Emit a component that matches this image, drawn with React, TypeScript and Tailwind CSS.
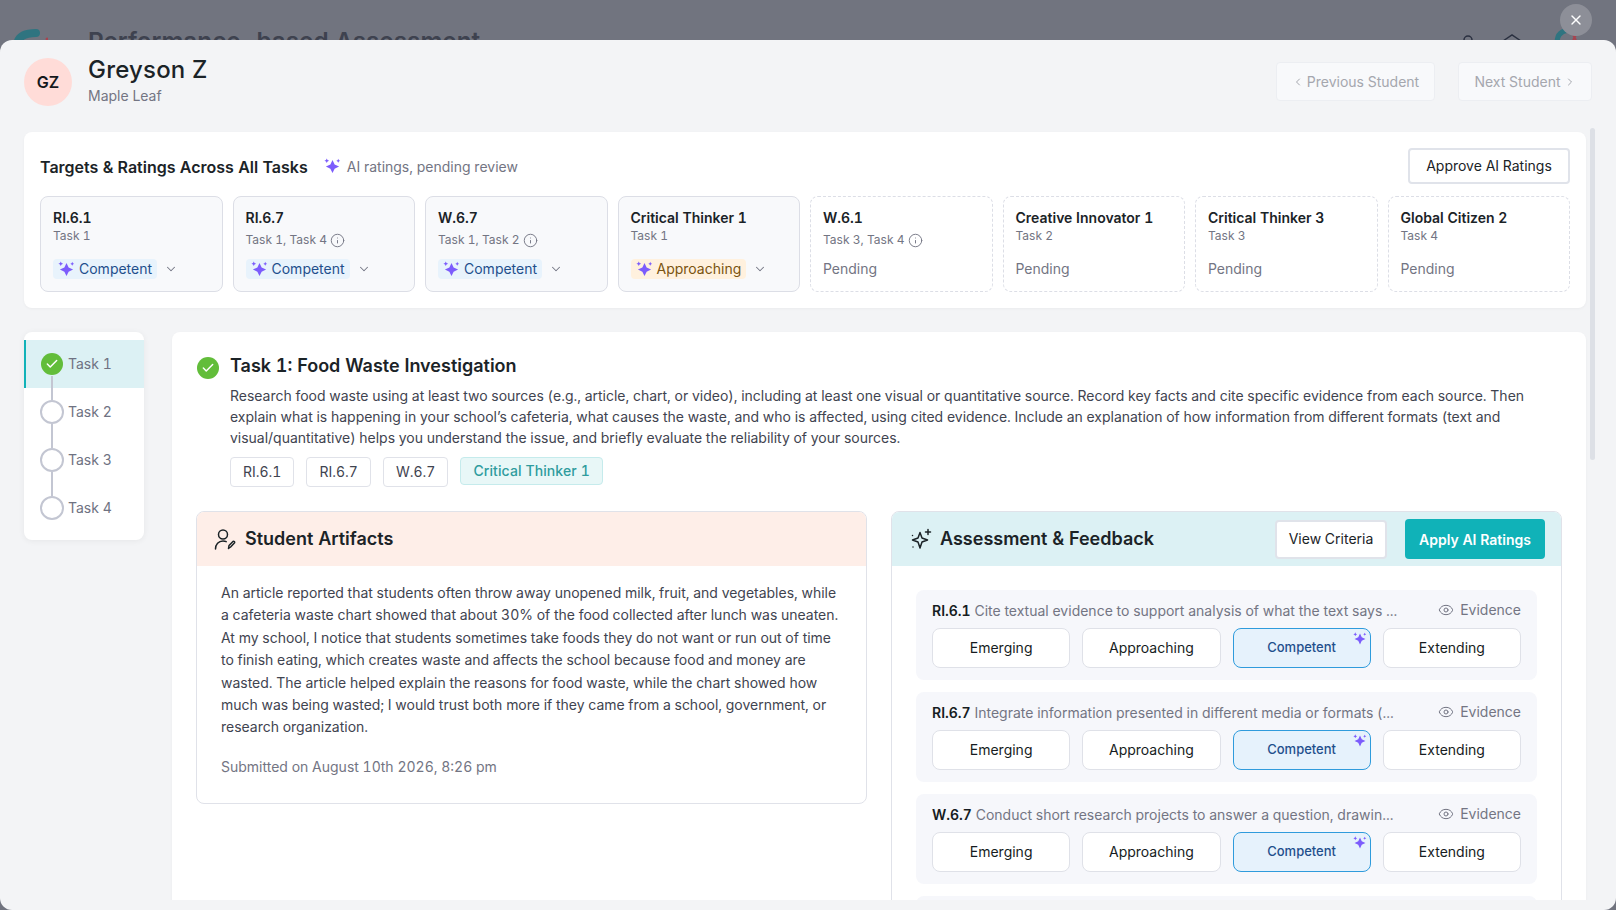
import { Check, ChevronDown, ChevronLeft, ChevronRight, Eye, Info, X } from 'lucide-react';

const TARGETS = [
  { name: 'RI.6.1', tasks: 'Task 1', rating: 'Competent' },
  { name: 'RI.6.7', tasks: 'Task 1, Task 4', info: true, rating: 'Competent' },
  { name: 'W.6.7', tasks: 'Task 1, Task 2', info: true, rating: 'Competent' },
  { name: 'Critical Thinker 1', tasks: 'Task 1', rating: 'Approaching' },
  { name: 'W.6.1', tasks: 'Task 3, Task 4', info: true },
  { name: 'Creative Innovator 1', tasks: 'Task 2' },
  { name: 'Critical Thinker 3', tasks: 'Task 3' },
  { name: 'Global Citizen 2', tasks: 'Task 4' },
];

const CRITERIA = [
  { code: 'RI.6.1', text: 'Cite textual evidence to support analysis of what the text says ...' },
  { code: 'RI.6.7', text: 'Integrate information presented in different media or formats (...' },
  { code: 'W.6.7', text: 'Conduct short research projects to answer a question, drawin...' },
];

const LEVELS = ['Emerging', 'Approaching', 'Competent', 'Extending'];

function AiSpark({ className }: { className?: string }) {
  return (
    <svg viewBox="0 0 16 16" className={className} fill="#7c5cfc">
      <path d="M8 1.8 10 6 14.2 8 10 10 8 14.2 6 10 1.8 8 6 6Z" />
      <path d="M2.6.4 3.3 1.9 4.8 2.6 3.3 3.3 2.6 4.8 1.9 3.3.4 2.6 1.9 1.9Z" />
      <path d="M13.4.8 14 2 15.2 2.6 14 3.2 13.4 4.4 12.8 3.2 11.6 2.6 12.8 2Z" />
    </svg>
  );
}

function TargetCard({ target }: { target: (typeof TARGETS)[number] }) {
  const pending = !target.rating;
  return (
    <div
      className={`h-[96px] rounded-lg border px-3 pt-[12px] ${
        pending ? 'border-dashed border-[#dcdee6] bg-white' : 'border-[#dcdee6] bg-[#f8f9fb]'
      }`}
    >
      <div className="text-sm leading-[18px] font-semibold text-[#1b2327]">{target.name}</div>
      {target.info ? (
        <div className="mt-[5px] flex items-center gap-[3px] text-xs leading-4 text-[#737583]">
          {target.tasks}
          <Info className="h-[15px] w-[15px]" strokeWidth={1.5} />
        </div>
      ) : (
        <div className="mt-[1px] text-xs leading-4 text-[#737583]">{target.tasks}</div>
      )}
      <div className={`flex items-center ${target.info ? 'mt-[11px]' : 'mt-[15px]'}`}>
        {pending ? (
          <span className="text-sm leading-5 text-[#737583]">Pending</span>
        ) : (
          <>
            <span
              className={`flex h-5 items-center gap-[4px] rounded px-[5px] text-sm ${
                target.rating === 'Approaching' ? 'bg-[#fff1de] text-[#7a5410]' : 'bg-[#e8f3fc] text-[#1f4f8c]'
              }`}
            >
              <AiSpark className="h-[17px] w-[17px]" />
              {target.rating}
            </span>
            <ChevronDown className="ml-[7px] h-[14px] w-[14px] text-[#737583]" strokeWidth={1.75} />
          </>
        )}
      </div>
    </div>
  );
}

function TaskStep({ label, active, last }: { label: string; active?: boolean; last?: boolean }) {
  return (
    <div
      className={`relative flex h-12 items-center gap-[4px] border-l-2 pl-[14px] text-sm text-[#6f7282] ${
        active ? 'border-[#10b2b8] bg-[#dcf1f4]' : 'border-transparent'
      }`}
    >
      {!last && <div className="absolute top-[36px] left-[25px] h-[24px] w-[2px] bg-[#c3c6d2]" />}
      {active ? (
        <span className="relative mx-[1px] flex h-[22px] w-[22px] items-center justify-center rounded-full bg-[#62bd3a] text-white">
          <Check className="h-[14px] w-[14px]" strokeWidth={2.5} />
        </span>
      ) : (
        <span className="relative h-6 w-6 rounded-full border-2 border-[#c3c6d2] bg-white" />
      )}
      {label}
    </div>
  );
}

function CriteriaRow({ code, text }: { code: string; text: string }) {
  return (
    <div className="rounded-lg bg-[#f6f7fb] px-4 pt-[10px] pb-3">
      <div className="mb-[7px] flex h-[21px] items-center justify-between text-sm">
        <div className="truncate text-[#737583]">
          <span className="font-semibold text-[#161c22]">{code}</span> {text}
        </div>
        <div className="flex shrink-0 items-center gap-[6px] pb-[2px] text-[#737583]">
          <Eye className="h-4 w-4" strokeWidth={1.5} />
          Evidence
        </div>
      </div>
      <div className="grid grid-cols-4 gap-3">
        {LEVELS.map((level) =>
          level === 'Competent' ? (
            <button
              key={level}
              className="relative h-10 rounded-lg border border-[#2f9bdc] bg-[#e6f2fc] text-[13px] font-medium text-[#1f4f8c]"
            >
              {level}
              <AiSpark className="absolute top-[3px] right-[3px] h-[14px] w-[14px]" />
            </button>
          ) : (
            <button key={level} className="h-10 rounded-lg border border-[#dfe1e8] bg-white text-sm text-[#161c22]">
              {level}
            </button>
          ),
        )}
      </div>
    </div>
  );
}

export default function App() {
  return (
    <div className="relative h-[910px] w-[1616px] overflow-hidden bg-[#71747f] font-[Inter,sans-serif] tabular-nums">
      {/* Dimmed page behind the dialog */}
      <div className="flex h-10 items-start pt-[27px] pl-[14px]">
        <svg viewBox="0 0 34 32" className="h-8 w-[34px]" fill="none">
          <path d="M3 20C3 10 10 6 22 6" stroke="#2f7480" strokeWidth="8" strokeLinecap="round" />
          <circle cx="33" cy="12" r="1.5" fill="#a8434f" />
        </svg>
        <div className="-mt-[2px] ml-[40px] text-[24.3px] leading-8 font-semibold whitespace-nowrap text-[#3e424f]">
          Performance-based Assessment
        </div>
        <div className="ml-auto flex items-start pt-[6px] pr-[38px]">
          <svg viewBox="0 0 16 16" className="h-4 w-4" fill="none" stroke="#2a3040" strokeWidth="1.5">
            <circle cx="8" cy="7" r="4" />
          </svg>
          <svg viewBox="0 0 20 12" className="ml-[26px] h-3 w-5" fill="none" stroke="#2a3040" strokeWidth="1.5">
            <path d="M1 8 10 2 19 8" />
          </svg>
          <svg viewBox="0 0 24 16" className="-mt-[6px] ml-[32px] h-4 w-6" fill="none">
            <path d="M3 16C3 7 8 3 17 3" stroke="#2f7480" strokeWidth="5" />
            <path d="M19 8l3 5M22 8l-3 5" stroke="#a8434f" strokeWidth="2" />
          </svg>
        </div>
      </div>

      <button className="absolute top-1 left-[1560px] z-10 flex h-8 w-8 items-center justify-center rounded-full bg-[#8d8f98] text-white">
        <X className="h-4 w-4" strokeWidth={2} />
      </button>

      {/* Dialog */}
      <div className="absolute top-10 left-0 h-[870px] w-[1616px] rounded-xl bg-[#f3f4f6]">
        <header className="flex h-[88px] items-start px-6 pt-[18px]">
          <div className="flex h-12 w-12 items-center justify-center rounded-full bg-[#ffdcd8] text-base font-semibold text-[#14181c]">
            GZ
          </div>
          <div className="ml-4">
            <div className="-mt-[4px] text-2xl leading-8 font-medium tracking-[0.2px] text-[#1b2327]">Greyson Z</div>
            <div className="text-sm leading-5 text-[#737583]">Maple Leaf</div>
          </div>
          <div className="ml-auto flex gap-[23px] pt-[4px] text-sm text-[#a5a7ae]">
            <button className="flex h-[39px] w-[159px] items-center justify-center gap-[3px] rounded border border-[#eceef2] bg-[#f8f9fb]">
              <ChevronLeft className="h-3 w-3" />
              Previous Student
            </button>
            <button className="flex h-[39px] w-[134px] items-center justify-center gap-[3px] rounded border border-[#eceef2] bg-[#f8f9fb]">
              Next Student
              <ChevronRight className="h-3 w-3" />
            </button>
          </div>
        </header>

        <div className="flex h-[772px] overflow-hidden pl-6">
          <div className="w-[1562px] shrink-0 pt-1">
            <section className="h-[176px] rounded-lg bg-white px-4 pt-4 shadow-[0_1px_3px_rgba(0,0,0,0.04)]">
              <div className="flex h-9 items-center">
                <h2 className="pt-[2px] text-base font-semibold text-[#1b2327]">Targets &amp; Ratings Across All Tasks</h2>
                <AiSpark className="ml-4 h-[17px] w-[17px]" />
                <span className="ml-[6px] pt-[2px] text-sm text-[#737583]">AI ratings, pending review</span>
                <button className="ml-auto h-9 w-[162px] rounded-sm border-2 border-[#e0e3ea] bg-white text-sm text-[#1b2327]">
                  Approve AI Ratings
                </button>
              </div>
              <div className="mt-3 grid grid-cols-8 gap-[10px]">
                {TARGETS.map((t) => (
                  <TargetCard key={t.name} target={t} />
                ))}
              </div>
            </section>

            <div className="mt-6 flex items-start gap-7">
              <nav className="h-[208px] w-[120px] shrink-0 rounded-lg bg-white pt-2 shadow-[0_1px_6px_rgba(0,0,0,0.06)]">
                <TaskStep label="Task 1" active />
                <TaskStep label="Task 2" />
                <TaskStep label="Task 3" />
                <TaskStep label="Task 4" last />
              </nav>

              <main className="min-h-[600px] flex-1 rounded-lg bg-white px-6 pt-5 shadow-[0_1px_3px_rgba(0,0,0,0.04)]">
                <div className="flex items-start gap-[11px]">
                  <span className="mt-[5px] ml-[1px] flex h-[22px] w-[22px] shrink-0 items-center justify-center rounded-full bg-[#62bd3a] text-white">
                    <Check className="h-[14px] w-[14px]" strokeWidth={2.5} />
                  </span>
                  <div>
                    <h1 className="text-lg leading-7 font-semibold text-[#1b2327]">Task 1: Food Waste Investigation</h1>
                    <p className="mt-[5px] text-sm leading-[21px] tracking-[-0.015px] text-[#3f4450]">
                      Research food waste using at least two sources (e.g., article, chart, or video), including at least one visual or quantitative source. Record key facts and cite specific evidence from each source. Then explain what is happening in your school’s cafeteria, what causes the waste, and who is affected, using cited evidence. Include an explanation of how information from different formats (text and visual/quantitative) helps you understand the issue, and briefly evaluate the reliability of your sources.
                    </p>
                    <div className="mt-[9px] flex items-start gap-3 text-sm text-[#3f4450]">
                      {['RI.6.1', 'RI.6.7', 'W.6.7'].map((tag) => (
                        <span key={tag} className="flex h-[30px] items-center rounded border border-[#e0e2e9] px-3">
                          {tag}
                        </span>
                      ))}
                      <span className="flex h-[28px] items-center rounded border border-[#c5ebec] bg-[#e8f7f7] px-3 font-medium tracking-[0.1px] text-[#2f9c9e]">
                        Critical Thinker 1
                      </span>
                    </div>
                  </div>
                </div>

                <div className="mt-[24px] grid grid-cols-2 items-start gap-6">
                  <section className="overflow-hidden rounded-lg border border-[#e0e2e9]">
                    <div className="flex h-[54px] items-center gap-[8px] bg-[#feeee8] px-[16px]">
                      <svg viewBox="0 0 24 24" className="h-6 w-6" fill="none" stroke="#1b2327" strokeWidth="1.5" strokeLinecap="round" strokeLinejoin="round">
                        <circle cx="10" cy="7.5" r="4.5" />
                        <path d="M2.5 22c0-4.5 3-8 7.5-8 1.2 0 2.3.2 3.2.7" />
                        <path d="M15.5 21.5l.5-3 4.2-4.2c.6-.5 1.9.7 1.4 1.4l-4 4.3z" />
                      </svg>
                      <h3 className="text-lg font-semibold text-[#1b2327]">Student Artifacts</h3>
                    </div>
                    <div className="px-6 pt-4 pb-[25px] text-sm leading-[22.4px] text-[#3f4450]">
                      <p className="tracking-[-0.015px]">
                        An article reported that students often throw away unopened milk, fruit, and vegetables, while a cafeteria waste chart showed that about 30% of the food collected after lunch was uneaten. At my school, I notice that students sometimes take foods they do not want or run out of time to finish eating, which creates waste and affects the school because food and money are wasted. The article helped explain the reasons for food waste, while the chart showed how much was being wasted; I would trust both more if they came from a school, government, or research organization.
                      </p>
                      <p className="mt-[17px] text-[#737583]">Submitted on August 10th 2026, 8:26 pm</p>
                    </div>
                  </section>

                  <section className="overflow-hidden rounded-t-lg border border-[#e0e2e9]">
                    <div className="flex h-[54px] items-center bg-[#dcf1f4] pr-[16px] pl-[17px]">
                      <svg viewBox="0 0 24 24" className="h-6 w-6" fill="none" stroke="#1b2327" strokeWidth="1.5" strokeLinecap="round" strokeLinejoin="round">
                        <path d="M11 5.5 13 11l5.5 2-5.5 2-2 6-2-6-5.5-2L9 11z" />
                        <path d="M19 2.5v5M16.5 5h5" />
                        <path d="M3.5 8.5h.01M4 20h.01" />
                      </svg>
                      <h3 className="ml-[7px] text-lg font-semibold text-[#1b2327]">Assessment &amp; Feedback</h3>
                      <button className="ml-auto h-[39px] w-[112px] rounded-sm border-2 border-[#e0e3ea] bg-white text-sm text-[#1b2327]">
                        View Criteria
                      </button>
                      <button className="ml-[18px] h-10 w-[140px] rounded bg-[#10b2b8] pt-[1px] text-sm font-semibold text-white">
                        Apply AI Ratings
                      </button>
                    </div>
                    <div className="flex flex-col gap-3 px-6 pt-[24px] pb-6">
                      {CRITERIA.map((c) => (
                        <CriteriaRow key={c.code} code={c.code} text={c.text} />
                      ))}
                      <div className="h-[90px] rounded-lg bg-[#f6f7fb]" />
                    </div>
                  </section>
                </div>
              </main>
            </div>
          </div>

          <div className="ml-1 h-[332px] w-[5px] shrink-0 rounded-full bg-[#dde0e6]" />
        </div>
      </div>
    </div>
  );
}
